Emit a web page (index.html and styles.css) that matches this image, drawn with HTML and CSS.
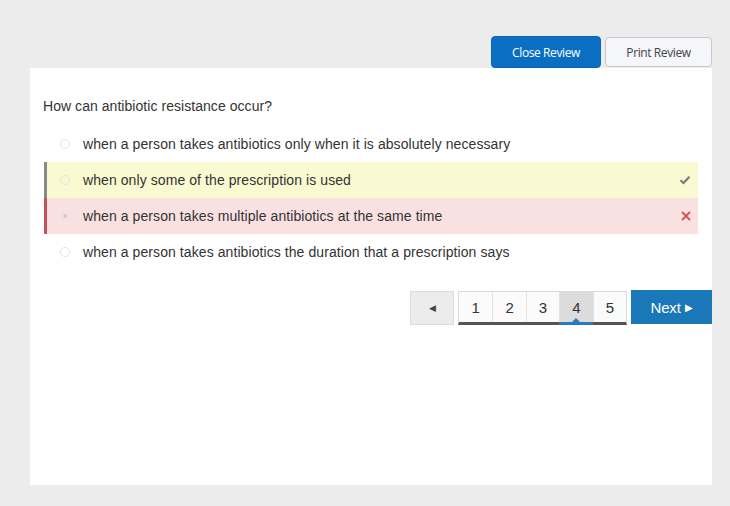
FILE: index.html
```html
<!DOCTYPE html>
<html>
<head>
<meta charset="utf-8">
<link rel="stylesheet" href="styles.css">
</head>
<body>
<div class="page">
  <div class="toolbar">
    <button class="btn btn-primary">Close Review</button>
    <button class="btn btn-default">Print Review</button>
  </div>
  <div class="card">
    <div class="question">How can antibiotic resistance occur?</div>
    <ul class="options">
      <li class="option"><span class="radio"></span><span class="label">when a person takes antibiotics only when it is absolutely necessary</span></li>
      <li class="option correct"><span class="radio"></span><span class="label">when only some of the prescription is used</span>
        <svg class="mark" width="12" height="10" viewBox="0 0 12 10"><path d="M1.5 5.2 L4.5 8 L10.5 1.8" fill="none" stroke="#7a7a7a" stroke-width="2.2"/></svg>
      </li>
      <li class="option wrong"><span class="radio selected"></span><span class="label">when a person takes multiple antibiotics at the same time</span>
        <svg class="mark" width="10" height="10" viewBox="0 0 10 10"><path d="M1 1 L9 9 M9 1 L1 9" fill="none" stroke="#d0575b" stroke-width="2"/></svg>
      </li>
      <li class="option"><span class="radio"></span><span class="label">when a person takes antibiotics the duration that a prescription says</span></li>
    </ul>
    <div class="pager">
      <button class="prev">&#9664;</button>
      <div class="pages">
        <span class="page-num">1</span>
        <span class="page-num">2</span>
        <span class="page-num">3</span>
        <span class="page-num active">4</span>
        <span class="page-num">5</span>
      </div>
      <button class="next">Next <span class="arrow">&#9654;</span></button>
    </div>
  </div>
</div>
</body>
</html>
```

FILE: styles.css
```css
html, body {
  margin: 0;
  padding: 0;
  background: #ececec;
}
body {
  width: 730px;
  height: 506px;
  overflow: hidden;
  font-family: Arial, "Liberation Sans", sans-serif;
  color: #333;
}
.page {
  padding: 36px 18px 0 30px;
}
.toolbar {
  display: flex;
  justify-content: flex-end;
  align-items: center;
  gap: 4px;
  height: 32px;
}
.btn {
  font-family: "Open Sans", sans-serif;
  font-size: 12px;
  letter-spacing: -0.4px;
  border-radius: 4px;
  padding: 0;
  cursor: pointer;
}
.btn-primary {
  width: 110px;
  height: 32px;
  background: #0a6fc2;
  border: 1px solid #0866b4;
  color: #fff;
}
.btn-default {
  width: 107px;
  height: 30px;
  background: #f4f6f9;
  border: 1px solid #c8c8c8;
  color: #444;
}
.card {
  background: #fff;
  height: 417px;
  padding: 30px 0 0 13px;
  box-sizing: border-box;
}
.question {
  font-size: 14px;
  line-height: 16px;
  color: #333;
  letter-spacing: 0.05px;
}
.options {
  list-style: none;
  margin: 12px 14px 0 1px;
  padding: 0;
}
.option {
  height: 36px;
  display: flex;
  align-items: center;
  border-left: 3px solid transparent;
  font-size: 14px;
  letter-spacing: 0.08px;
  color: #333;
  position: relative;
}
.option.correct {
  background: #fafad2;
  border-left-color: #8a8a8a;
}
.option.wrong {
  background: #fae1e1;
  border-left-color: #c0555a;
}
.radio {
  width: 8px;
  height: 8px;
  border: 1px solid #e4e4e4;
  border-radius: 50%;
  margin-left: 13px;
  margin-right: 13px;
  box-sizing: content-box;
  position: relative;
}
.radio.selected::after {
  content: "";
  position: absolute;
  left: 2px;
  top: 2px;
  width: 4px;
  height: 4px;
  border-radius: 50%;
  background: #e0c4c4;
}
.mark {
  margin-left: auto;
  margin-right: 7px;
}
.pager {
  display: flex;
  justify-content: flex-end;
  align-items: flex-start;
  gap: 4px;
  margin-top: 20px;
}
.prev {
  margin-top: 1px;
  width: 44px;
  height: 34px;
  background: #ececec;
  border: 1px solid #dcdcdc;
  color: #444;
  font-size: 9px;
  padding: 0;
}
.pages {
  margin-top: 1px;
  display: flex;
  border: 1px solid #dcdcdc;
  border-bottom: 3px solid #555;
  height: 30px;
}
.page-num {
  width: 33.4px;
  box-sizing: border-box;
  height: 30px;
  display: flex;
  align-items: center;
  justify-content: center;
  font-size: 15px;
  color: #333;
  border-left: 1px solid #e2e2e2;
  position: relative;
  background: #fbfbfb;
}
.page-num:first-child {
  border-left: none;
}
.page-num.active {
  background: #dcdcdc;
}
.page-num.active::after {
  content: "";
  position: absolute;
  left: -1px;
  right: 0;
  bottom: -3px;
  height: 3px;
  background: #2b7bbb;
}
.page-num.active::before {
  content: "";
  position: absolute;
  left: 50%;
  margin-left: -4px;
  bottom: 0;
  border-left: 4px solid transparent;
  border-right: 4px solid transparent;
  border-bottom: 4px solid #2b7bbb;
}
.next {
  width: 81px;
  height: 34px;
  background: #1a78b8;
  border: none;
  color: #fff;
  font-family: Arial, "Liberation Sans", sans-serif;
  font-size: 15px;
  letter-spacing: -0.2px;
  padding: 0;
}
.next .arrow {
  font-size: 10px;
  vertical-align: 2px;
}
```
